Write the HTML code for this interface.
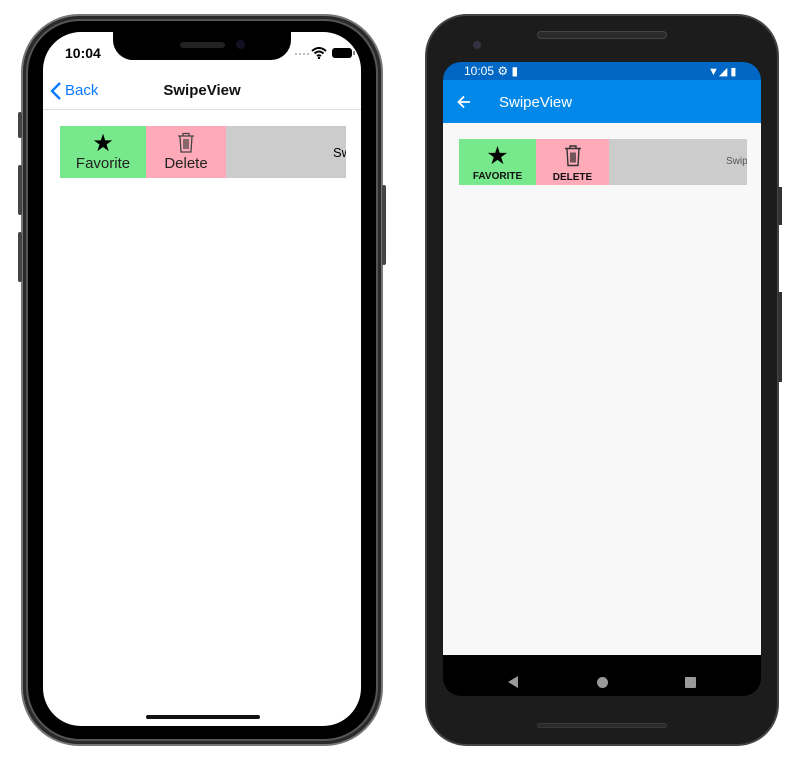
<!DOCTYPE html>
<html><head><meta charset="utf-8"><style>
*{margin:0;padding:0;box-sizing:border-box}
body{width:800px;height:760px;background:#fff;position:relative;overflow:hidden;font-family:"Liberation Sans",sans-serif}
.a{position:absolute}
</style></head><body>
<!-- iPhone -->
<div class="a" style="left:21px;top:14px;width:362px;height:732px;border-radius:58px;background:#2a2a2a;border:2px solid #777"></div>
<div class="a" style="left:26px;top:19px;width:352px;height:722px;border-radius:54px;background:#000;border:2px solid #555"></div>
<div class="a" style="left:18px;top:112px;width:4px;height:26px;background:#444;border-radius:2px"></div>
<div class="a" style="left:18px;top:165px;width:4px;height:50px;background:#444;border-radius:2px"></div>
<div class="a" style="left:18px;top:232px;width:4px;height:50px;background:#444;border-radius:2px"></div>
<div class="a" style="left:382px;top:185px;width:4px;height:80px;background:#444;border-radius:2px"></div>
<div class="a" style="left:43px;top:32px;width:318px;height:694px;border-radius:38px;background:#fff;overflow:hidden">
  <div class="a" style="left:70px;top:-2px;width:178px;height:30px;background:#000;border-radius:0 0 20px 20px"></div>
  <div class="a" style="left:137px;top:10px;width:45px;height:6px;background:#222;border-radius:3px"></div>
  <div class="a" style="left:193px;top:8px;width:9px;height:9px;background:#112;border-radius:50%"></div>
  <div class="a" style="left:22px;top:13px;font-size:14px;font-weight:bold;color:#000">10:04</div>
  <div class="a" style="left:252px;top:21px;width:14px;height:2px;border-top:2px dotted #bbb"></div>
  <svg class="a" style="left:268px;top:15px" width="16" height="12" viewBox="0 0 16 12"><path d="M1 4Q8-2 15 4M3.5 6.5Q8 2.5 12.5 6.5M6 9Q8 7.5 10 9" stroke="#000" stroke-width="2" fill="none"/><circle cx="8" cy="11" r="1.2"/></svg>
  <div class="a" style="left:289px;top:16px;width:20px;height:10px;background:#000;border-radius:3px"></div>
  <div class="a" style="left:310px;top:19px;width:2px;height:4px;background:#888"></div>
  <svg class="a" style="left:7px;top:50px" width="12" height="18" viewBox="0 0 12 18"><path d="M10 1L2 9l8 8" stroke="#0a7aff" stroke-width="2.4" fill="none"/></svg>
  <div class="a" style="left:22px;top:50px;font-size:15px;color:#0a7aff">Back</div>
  <div class="a" style="left:0;width:318px;top:50px;text-align:center;font-size:15px;font-weight:bold;color:#111">SwipeView</div>
  <div class="a" style="left:0;top:77px;width:318px;height:1px;background:#ddd"></div>
  <div class="a" style="left:17px;top:94px;width:286px;height:52px;background:#ccc;overflow:hidden">
    <div class="a" style="left:0;top:0;width:86px;height:52px;background:#78e88c;text-align:center">
      <div style="font-size:24px;line-height:24px;margin-top:6px">★</div>
      <div style="font-size:15px;color:#222;margin-top:-1px">Favorite</div></div>
    <div class="a" style="left:86px;top:0;width:80px;height:52px;background:#ffaab8;text-align:center">
      <svg style="margin-top:6px" width="18" height="21" viewBox="0 0 18 21"><path d="M1 4h16M6 4V1.5h6V4M3 4l1 16h10l1-16M7 7v10M9 7v10M11 7v10" stroke="#444" stroke-width="1.3" fill="none"/></svg>
      <div style="font-size:15px;color:#222;margin-top:-3px">Delete</div></div>
    <div class="a" style="left:273px;top:19px;font-size:13px">Sw</div>
  </div>
  <div class="a" style="left:103px;top:683px;width:114px;height:4px;background:#111;border-radius:2px"></div>
</div>
<!-- Android -->
<div class="a" style="left:425px;top:14px;width:354px;height:732px;border-radius:42px;background:#1c1c1c;border:2px solid #444"></div>
<div class="a" style="left:778px;top:187px;width:4px;height:38px;background:#333"></div>
<div class="a" style="left:778px;top:292px;width:4px;height:90px;background:#333"></div>
<div class="a" style="left:537px;top:31px;width:130px;height:8px;background:#2a2a2a;border-radius:4px;border:1px solid #444"></div>
<div class="a" style="left:537px;top:723px;width:130px;height:5px;background:#2a2a2a;border-radius:3px;border:1px solid #3a3a3a"></div>
<div class="a" style="left:473px;top:41px;width:8px;height:8px;border-radius:50%;background:#334"></div>
<div class="a" style="left:443px;top:62px;width:318px;height:634px;border-radius:18px;background:#000;overflow:hidden">
  <div class="a" style="left:0;top:0;width:318px;height:18px;background:#0068c4"></div>
  <div class="a" style="left:21px;top:2px;font-size:12px;color:#fff">10:05 ⚙ ▮</div>
  <div class="a" style="left:265px;top:3px;font-size:11px;color:#fff">▼◢ ▮</div>
  <div class="a" style="left:0;top:18px;width:318px;height:43px;background:#0288e8"></div>
  <svg class="a" style="left:14px;top:33px" width="14" height="14" viewBox="0 0 14 14"><path d="M13 7H2M7 1.5L1.5 7 7 12.5" stroke="#fff" stroke-width="1.8" fill="none"/></svg>
  <div class="a" style="left:56px;top:32px;font-size:15px;color:#fff">SwipeView</div>
  <div class="a" style="left:0;top:61px;width:318px;height:532px;background:#f8f8f8"></div>
  <div class="a" style="left:16px;top:77px;width:288px;height:46px;background:#ccc;overflow:hidden">
    <div class="a" style="left:0;top:0;width:77px;height:46px;background:#78e88c;text-align:center">
      <div style="font-size:25px;line-height:25px;margin-top:5px">★</div>
      <div style="font-size:10px;font-weight:bold;color:#111;margin-top:2px">FAVORITE</div></div>
    <div class="a" style="left:77px;top:0;width:73px;height:46px;background:#ffaab8;text-align:center">
      <svg style="margin-top:5px" width="18" height="23" viewBox="0 0 18 22"><path d="M1 4h16M6 4V1.5h6V4M3 4l1 17h10l1-17M7 8v10M9 8v10M11 8v10" stroke="#333" stroke-width="1.4" fill="none"/></svg>
      <div style="font-size:10px;font-weight:bold;color:#111;margin-top:0px">DELETE</div></div>
    <div class="a" style="left:267px;top:17px;font-size:10px;color:#555">Swip</div>
  </div>
  <svg class="a" style="left:64px;top:613px" width="12" height="14"><path d="M11 1v12L1 7z" fill="#999"/></svg>
  <div class="a" style="left:154px;top:615px;width:11px;height:11px;border-radius:50%;background:#999"></div>
  <div class="a" style="left:242px;top:615px;width:11px;height:11px;background:#999;border-radius:1px"></div>
</div>
</body></html>
